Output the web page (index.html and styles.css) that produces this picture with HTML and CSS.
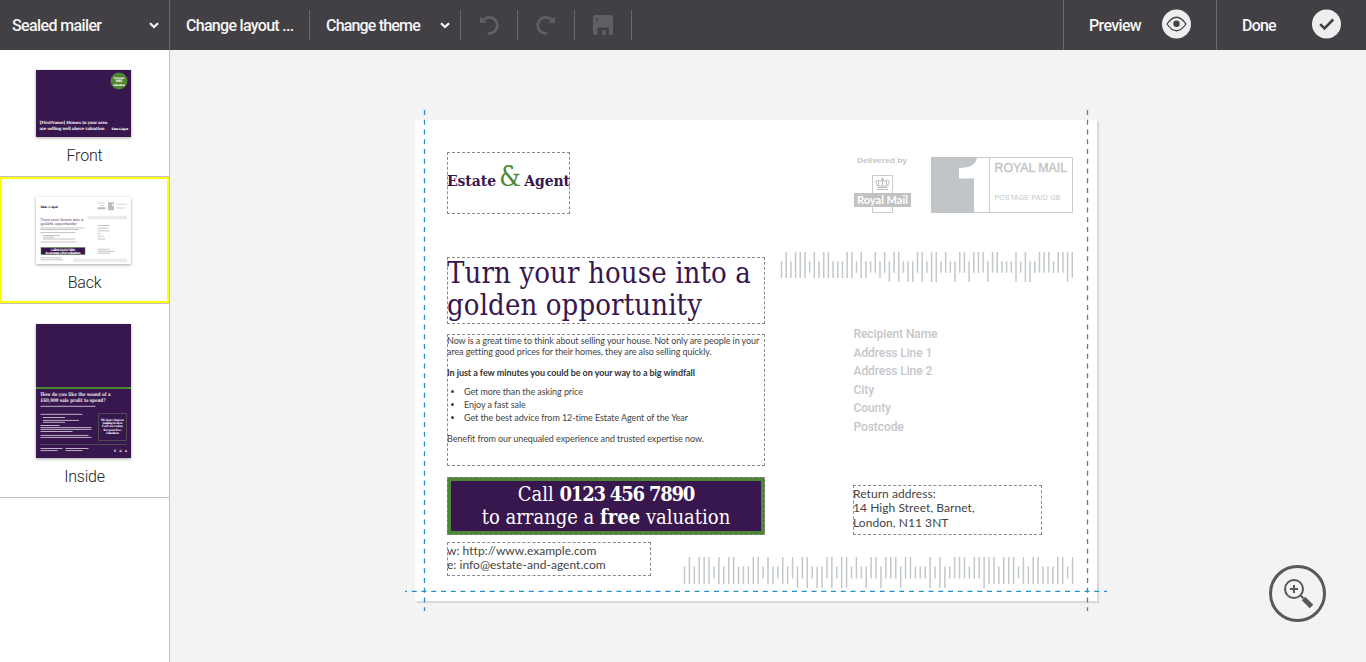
FILE: index.html
```html
<!DOCTYPE html>
<html lang="en">
<head>
<meta charset="utf-8">
<title>Sealed mailer</title>
<link rel="stylesheet" href="styles.css">
</head>
<body>
<div class="app">
  <header class="topbar">
    <div class="tool product"><span>Sealed mailer</span>
      <svg class="chevron" width="10" height="7" viewBox="0 0 10 7"><path d="M1 1.2 5 5 9 1.2"/></svg>
    </div>
    <div class="tool layout"><span>Change layout ...</span></div>
    <div class="tool theme"><span>Change theme</span>
      <svg class="chevron" width="10" height="7" viewBox="0 0 10 7"><path d="M1 1.2 5 5 9 1.2"/></svg>
    </div>
    <div class="tool icon">
      <svg width="20" height="20" viewBox="0 0 20 20"><path class="arc" d="M8.700 18.200A8 8 0 1 0 4.500 4.800"/><path class="solid" d="M1 1.500v6.200h6.700Z"/></svg>
    </div>
    <div class="tool icon">
      <svg width="20" height="20" viewBox="0 0 20 20"><path class="arc" d="M11.300 18.200A8 8 0 1 1 15.500 4.800"/><path class="solid" d="M19 1.500v6.200h-6.700Z"/></svg>
    </div>
    <div class="tool icon">
      <svg width="20" height="20" viewBox="0 0 20 20"><path class="solid" fill-rule="evenodd" d="M1.500 0h17L20 1.500v17L18.500 20H16v-7.500H4.500V20h-3L0 18.500v-17ZM3 3.500v2h2v-2ZM9 15h3.500v5H9Z"/></svg>
    </div>
    <div class="spacer"></div>
    <div class="tool preview"><span>Preview</span>
      <svg width="30" height="30" viewBox="0 0 30 30"><circle class="disc" cx="14.500" cy="15" r="14.500"/><path class="eye" d="M5 15Q14.500 1.500 24 15 14.500 28.500 5 15Z"/><circle class="pupil" cx="14.500" cy="14.800" r="3.200"/></svg>
    </div>
    <div class="tool done"><span>Done</span>
      <svg width="30" height="30" viewBox="0 0 30 30"><circle class="disc" cx="14.500" cy="15" r="14.500"/><path class="tick" d="M8.200 15.200 12.500 19.500 21.200 10.500"/></svg>
    </div>
  </header>

  <main class="workspace">
    <nav class="pages">
      <div class="page-item front">
        <svg class="thumb purple" width="95" height="67" viewBox="0 0 95 67">
          <circle class="green" cx="83" cy="11" r="8.500"/>
          <g class="tiny slab" text-anchor="middle"><text x="83" y="8.500" textLength="11">Get your</text><text x="83" y="12.300" textLength="7">FREE</text><text x="83" y="16" textLength="12">valuation</text></g>
          <g class="head slab"><text x="3.500" y="54.300" textLength="68">[FirstName] Homes in your area</text><text x="3.500" y="59.600" textLength="65">are selling well above valuation</text></g>
          <text class="tiny slab" x="75.500" y="60" textLength="17">Estate &amp; Agent</text>
        </svg>
        <span>Front</span>
      </div>
      <div class="page-item back">
        <svg class="thumb" width="95" height="67" viewBox="0 0 95 67">
          <g class="slab tiny violet"><text x="4.500" y="10.500" textLength="7">Estate</text><text class="greentext" x="12" y="10.500">&amp;</text><text x="15" y="10.500" textLength="7">Agent</text></g>
          <g class="slab title violet"><text x="4.500" y="23.500" textLength="43">Turn your house into a</text><text x="4.500" y="28" textLength="36">golden opportunity</text></g>
          <path class="copy" d="M4.500 31h44M4.500 32.600h38M4.500 35.600h35M7 38.500h17M7 40.200h11M7 42h32M4.500 45h36M4.500 60.800h21M4.500 62.800h22.500M61.500 28.500h12M61.500 31.200h11M61.500 33.800h12M61.500 36.500h3M61.500 39.200h6M61.500 42h7.500M61.500 52.300h12M61.500 54.300h17M61.500 56.200h13"/>
          <rect class="cta-mini" x="5" y="50.500" width="44" height="7"/>
          <g class="slab mini-white" text-anchor="middle"><text x="27" y="53.800" textLength="24">Call 0123 456 7890</text><text x="27" y="57" textLength="35">to arrange a free valuation</text></g>
          <path class="grey" d="M61.500 10.200h8v2h-8ZM72 5.300h6v2h-2v1.500h2v4.500h-6Z"/>
          <path class="faint" d="M62 6h7M64 8.500h4M80 7.200h11M80 11h9"/>
          <path class="mini-bars" d="M51.500 20.500h40M37.500 63.300h54"/>
        </svg>
        <span>Back</span>
      </div>
      <div class="page-item inside">
        <svg class="thumb purple" width="95" height="134" viewBox="0 0 95 134">
          <rect class="green" y="63" width="95" height="2"/>
          <g class="head big slab"><text x="4.500" y="72" textLength="70" lengthAdjust="spacingAndGlyphs">How do you like the sound of a</text><text x="4.500" y="77.500" textLength="65" lengthAdjust="spacingAndGlyphs">£60,000 sale profit to spend?</text></g>
          <path class="white-copy" d="M4.500 82.300h55M4.500 90.300h42M7 93.500h22M7 96.400h36M7 98.300h22M4.500 101.500h19M4.500 103.600h51M4.500 105.400h51M4.500 107.500h32M4.500 111.400h48M4.500 113.400h51M4.500 124.500h22M4.500 126.600h17M29.500 124.500h23M29.500 126.600h17"/>
          <path class="frame" d="M62.500 89.500h28v27h-28ZM4.500 120.500h86"/>
          <g class="tiny slab" text-anchor="middle"><text x="76.500" y="96.500" textLength="23">We have buyers</text><text x="76.500" y="100" textLength="20">waiting to view</text><text x="76.500" y="103" textLength="21">Call us today</text><text x="76.500" y="106.500" textLength="18">for your free</text><text x="76.500" y="110" textLength="13">valuation</text></g>
          <text class="tiny slab" x="78" y="128" textLength="13">E &amp; A</text>
        </svg>
        <span>Inside</span>
      </div>
    </nav>

    <section class="stage">
      <div class="sheet">
        <div class="block logo"><span>Estate</span><span class="amp">&amp;</span><span>Agent</span></div>
        <h1 class="block heading">Turn your house into a<br>golden opportunity</h1>
        <div class="block copytext">
          <p>Now is a great time to think about selling your house. Not only are people in your<br>area getting good prices for their homes, they are also selling quickly.</p>
          <p class="strong">In just a few minutes you could be on your way to a big windfall</p>
          <ul><li>Get more than the asking price</li><li>Enjoy a fast sale</li><li>Get the best advice from 12-time Estate Agent of the Year</li></ul>
          <p class="last">Benefit from our unequaled experience and trusted expertise now.</p>
        </div>
        <div class="block cta"><span>Call <b class="phone">0123 456 7890</b></span><span>to arrange a <b>free</b> valuation</span></div>
        <div class="block contact">w: http://www.example.com<br>e: info@estate-and-agent.com</div>

        <svg class="postage" width="222" height="60" viewBox="0 0 222 60">
          <text class="by" x="4" y="7.500" textLength="50" lengthAdjust="spacingAndGlyphs">Delivered by</text>
          <path class="thin" d="M19.500 20.500h20v37h-20Z"/>
          <g class="crown"><path d="M24 34.500h11M24.500 32.500h10M24.500 31l-2-4.500q2.500-3 4.500 0 2-3 5 0 2.500-3 4.500 0l-2 4.500ZM25.500 30.500v-4M29.500 30.500v-8M33.500 30.500v-4M28 24.500h3"/></g>
          <rect class="rm-bg" x="1" y="38" width="57" height="14"/>
          <text class="rm" x="4" y="48.500" textLength="51" lengthAdjust="spacingAndGlyphs">Royal Mail</text>
          <path class="thin" d="M78.500 2.500h141v55h-141ZM136.500 2v56"/>
          <path class="one" d="M78 2h46Q123 13 106 13v10.500h15V58H78Z"/>
          <text class="rmail" x="141.500" y="17.300" textLength="72.500" lengthAdjust="spacingAndGlyphs">ROYAL MAIL</text>
          <text class="paid" x="141.500" y="45" textLength="66">POSTAGE PAID GB</text>
        </svg>
        <svg class="bars bars-top" width="294" height="30" data-pitch="4.690" data-bars="MTMTTTSTMTTMMMTTSTMSAMADAFSDDAFSFFSASDAADAAADAASSSFSFDSAAASAAFT"></svg>
        <div class="address">Recipient Name<br>Address Line 1<br>Address Line 2<br>City<br>County<br>Postcode</div>
        <div class="block return">Return address:<br>14 High Street, Barnet,<br>London, N11 3NT</div>
        <svg class="bars bars-bottom" width="391" height="31" data-pitch="4.912" data-bars="MTMTTTSTMTTMMMTTSTMSTMADAFSDDAFSFFSASDAADAAADAASSSFSFDSAAASAAFTTMTTTSTMTTMMMTTST"></svg>

        <svg class="guides" width="702" height="501" viewBox="0 0 702 501"><path d="M19.500 0V501M682.500 0V501"/><path class="fold" d="M0 481.300H702"/></svg>
      </div>
      <svg class="zoom-in" width="58" height="58" viewBox="0 0 58 58"><circle cx="29.500" cy="28.500" r="27"/><circle class="lens" cx="26" cy="24" r="9"/><path class="plus" d="M22 24h8M26 20v8"/><path class="neck" d="m32.500 30.500 3 3"/><path class="handle" d="m35.500 33.500 8 8"/></svg>
    </section>
  </main>
</div>
<script src="bars.js"></script>
</body>
</html>
```

FILE: styles.css
```css
* { box-sizing: border-box; }
body { margin: 0; font-family: Roboto, "Liberation Sans", sans-serif; background: #f3f3f3; overflow: hidden; }
.app { display: flex; flex-direction: column; height: 662px; }

.topbar { display: flex; height: 50px; background: #424044; color: #f5f5f5; font-size: 16px; font-weight: 500; align-items: center; flex: none; }
.tool { display: flex; align-items: center; justify-content: space-between; height: 30px; border-right: 1px solid #68676b; white-space: nowrap; }
.product { width: 170px; height: 50px; padding: 0 10px 0 12px; letter-spacing: -.62px; }
.layout { width: 140px; padding: 1px 0 0 16px; letter-spacing: -.7px; }
.theme { width: 151px; padding: 1px 10px 0 16px; letter-spacing: -.82px; }
.icon { width: 57px; justify-content: center; }
.spacer { flex: 1; }
.preview { width: 154px; height: 50px; padding: 1px 24px 0 25px; border-left: 1px solid #68676b; letter-spacing: -.65px; }
.done { width: 149px; height: 50px; padding: 1px 24px 0 25px; border-right: 0; letter-spacing: -.8px; }
.preview svg, .done svg { margin-bottom: 3px; }
.chevron { fill: none; stroke: #fff; stroke-width: 2.200; }
.arc { fill: none; stroke: #5e6065; stroke-width: 2.800; }
.solid { fill: #5e6065; }
.disc { fill: #eee; }
.eye { fill: none; stroke: #424044; stroke-width: 1.300; }
.pupil { fill: #424044; }
.tick { fill: none; stroke: #424044; stroke-width: 2.600; }

.workspace { display: flex; flex: 1; min-height: 0; }
.pages { width: 170px; background: #fff; border-right: 1px solid #bfc1c4; flex: none; }
.page-item { display: flex; flex-direction: column; align-items: center; border-bottom: 1px solid #bfc1c4; font-size: 16px; font-weight: 300; color: #222; padding-right: 2px; }
.page-item span { padding-left: 2px; line-height: 20px; letter-spacing: -.2px; }
.front { height: 127px; padding-top: 20px; }
.front span { margin-top: 9px; }
.back { height: 127px; padding-top: 20px; box-shadow: inset 0 0 0 2px #ff0; }
.back span { margin-top: 9px; }
.inside { height: 194px; padding-top: 20px; }
.inside span { margin-top: 9px; }
.thumb { background: #fff; box-shadow: 0 1px 3px rgba(0,0,0,.35); flex: none; }
.purple { background: #38164e; }
.green { fill: #4d8634; }
.slab { font-family: "DejaVu Serif", serif; font-weight: 700; }
.tiny { font-size: 3px; fill: #fff; }
.head { font-size: 4.200px; fill: #eee6f2; }
.big { font-size: 5px; }
.tiny.violet { fill: #38164e; }
.violet { fill: #5d4570; }
.greentext { fill: #4d8634; }
.title { font-size: 4px; font-weight: 400; }
.mini-white { font-size: 3.200px; fill: #fff; }
.copy { stroke: #b4b4b8; stroke-width: .8; }
.cta-mini { fill: #38164e; stroke: #4d8634; stroke-width: .5; }
.grey { fill: #b9bdc0; }
.faint { stroke: #d3d5d7; stroke-width: 1; }
.mini-bars { stroke: #e0e2e3; stroke-width: 3.500; stroke-dasharray: 1.300 .7; }
.white-copy { stroke: #cdc4d4; stroke-width: .9; }
.frame { fill: none; stroke: #504a52; stroke-width: 1; }

.stage { flex: 1; position: relative; padding: 70px 0 0 245px; background: #f3f3f3; }
.sheet { position: relative; width: 682px; height: 481px; background: #fff; box-shadow: 2px 2px 1px rgba(0,0,0,.1); }
.block { position: absolute; outline: 1px dashed #8a8a8a; outline-offset: -1px; white-space: nowrap; margin: 0; font-variant-ligatures: none; }
.logo { left: 32px; top: 32px; width: 123px; height: 62px; display: flex; align-items: baseline; justify-content: space-between; padding-top: 10px; font: 700 15.500px/30px "DejaVu Serif Condensed", "DejaVu Serif", serif; font-stretch: condensed; letter-spacing: -.05px; color: #38164e; }
.logo .amp { color: #4d8634; font-size: 27px; font-weight: 400; letter-spacing: 0; }
.heading { left: 32px; top: 137px; width: 318px; height: 67px; font: 400 29px/32px "DejaVu Serif Condensed", "DejaVu Serif", serif; font-stretch: condensed; letter-spacing: .12px; color: #38164e; }
.copytext { left: 32px; top: 214px; width: 318px; height: 132px; padding-top: 1px; font: 400 9px/11px Lato, sans-serif; letter-spacing: -.08px; color: #444; }
.copytext p { margin: 0; }
.copytext .strong { margin-top: 10px; font-weight: 700; letter-spacing: -.06px; color: #333; }
.copytext ul { margin: 7px 0 0; padding: 0 0 0 17px; line-height: 13px; }
.copytext .last { margin-top: 9px; }
.cta { left: 32px; top: 357px; width: 318px; height: 58px; background: #38164e; box-shadow: inset 0 0 0 4px #4d8634; color: #fff; display: flex; flex-direction: column; align-items: center; padding-top: 6px; font: 400 20px/23px "DejaVu Serif Condensed", "DejaVu Serif", serif; font-stretch: condensed; }
.cta .phone { letter-spacing: -1.2px; }
.contact { left: 32px; top: 422px; width: 204px; height: 34px; font: 400 12px/14px Lato, sans-serif; color: #444; padding-top: 2px; letter-spacing: .03px; }
.return { left: 438px; top: 365px; width: 189px; height: 50px; font: 400 12px/14.500px Lato, sans-serif; color: #444; padding-top: 1.500px; letter-spacing: .06px; }
.address { position: absolute; left: 438.500px; top: 205px; font: 500 12px/18.600px Roboto, sans-serif; letter-spacing: -.08px; color: #c4c7ca; }
.postage { position: absolute; left: 438px; top: 35px; }
.postage text { font-family: "Liberation Sans", sans-serif; fill: #c1c5c8; }
.postage .by { font-size: 8px; font-weight: 700; }
.postage .rm { font-family: Lato, sans-serif; font-size: 11px; font-weight: 700; fill: #fff; }
.postage .rmail { font-size: 12px; stroke: #c1c5c8; stroke-width: .4; }
.postage .paid { font-size: 7px; }
.thin { fill: none; stroke: #c9ccce; }
.one { fill: #c1c5c8; }
.rm-bg { fill: #c2c2c2; }
.crown { fill: none; stroke: #b9bbbd; stroke-width: 1; }
.bars { position: absolute; stroke: #c3c8ca; stroke-width: 1.500; }
.bars-top { left: 365px; top: 132px; }
.bars-bottom { left: 268px; top: 437px; }
.guides { position: absolute; left: -10px; top: -10px; fill: none; stroke: #258fcc; stroke-width: 1.300; stroke-dasharray: 5 4.750; }
.guides .fold { stroke-dashoffset: 3; }
.zoom-in { position: absolute; right: 40px; bottom: 39px; fill: none; stroke: #58585b; stroke-width: 3; }
.zoom-in .lens, .zoom-in .plus, .zoom-in .neck { stroke-width: 2; }
.zoom-in .handle { stroke-width: 5; }
```

FILE: bars.js
```js
// Each letter is a bar shape: [top, bottom] as fractions of the strip's height.
const shapes = { M: [.31, .87], T: [0, .87], S: [.31, .69], A: [0, .69], D: [.31, 1], F: [0, 1] };
document.querySelectorAll('.bars').forEach((svg) => {
  const h = svg.height.baseVal.value;
  const path = document.createElementNS('http://www.w3.org/2000/svg', 'path');
  path.setAttribute('d', [...svg.dataset.bars].map((c, i) =>
    `M${(1.5 + i * svg.dataset.pitch).toFixed(2)} ${shapes[c][0] * h}V${shapes[c][1] * h}`).join(''));
  svg.append(path);
});
```
